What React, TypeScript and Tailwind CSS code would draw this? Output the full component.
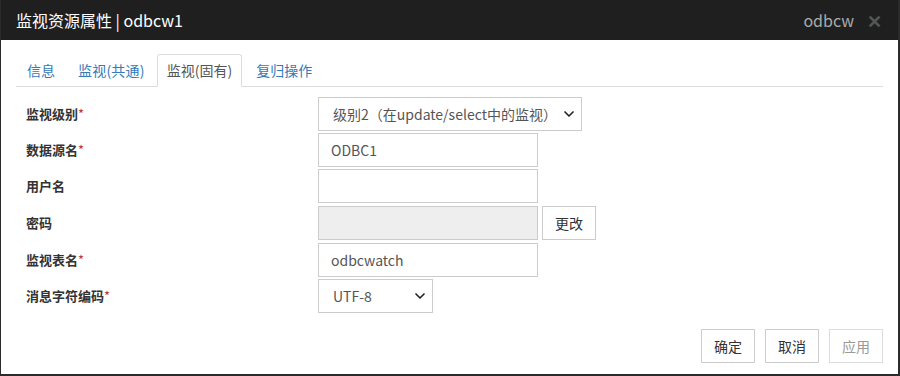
import { ChevronDown } from "lucide-react"

const font = { fontFamily: '"Noto Sans CJK SC", "Noto Sans", sans-serif' }

function Label({ text, required }: { text: string; required?: boolean }) {
  return (
    <div className="w-[292px] text-[13px] font-bold text-[#333]">
      {text}
      {required && <span className="text-[#c0392b] font-normal">*</span>}
    </div>
  )
}

function TextBox({ value, w = "w-[220px]", disabled }: { value?: string; w?: string; disabled?: boolean }) {
  return (
    <div className={`${w} h-[34px] border border-[#ccc] px-[12px] flex items-center text-[14px] text-[#555] ${disabled ? "bg-[#eee]" : "bg-white"}`}>
      {value}
    </div>
  )
}

function Select({ value, w }: { value: string; w: string }) {
  return (
    <div className={`${w} h-[34px] border border-[#ccc] pl-[14px] pr-[4px] flex items-center justify-between text-[14px] text-[#555] bg-white`}>
      <span>{value}</span>
      <ChevronDown size={16} strokeWidth={2.5} className="text-[#222]" />
    </div>
  )
}

function Btn({ text, disabled }: { text: string; disabled?: boolean }) {
  return (
    <div className={`w-[54px] h-[34px] border flex items-center justify-center text-[14px] bg-white ${disabled ? "border-[#ddd] text-[#999]" : "border-[#ccc] text-[#333]"}`}>
      {text}
    </div>
  )
}

export default function App() {
  return (
    <div style={font} className="w-[900px] h-[376px] bg-white border-l border-l-[#2b2b2b] border-r-2 border-r-[#2b2b2b] border-b-2 border-b-[#2b2b2b] flex flex-col">
      <header className="h-[40px] bg-[#1f1f1f] flex items-center justify-between pl-[15px] pr-[16px] shrink-0">
        <h1 className="text-[16px] text-white">监视资源属性 | odbcw1</h1>
        <div className="flex items-center gap-[13px]">
          <span className="text-[16px] text-[#aaa]">odbcw</span>
          <span className="text-[18px] font-bold text-[#555] leading-none">✕</span>
        </div>
      </header>

      <nav className="mt-[15px] mx-[15px] h-[32px] border-b border-[#ddd] flex items-end text-[14px]">
        <div className="px-[11px] h-[32px] flex items-center text-[#337ab7]">信息</div>
        <div className="px-[12px] h-[32px] flex items-center text-[#337ab7] tracking-[0.2px]">监视(共通)</div>
        <div className="px-[9px] h-[33px] -mb-px flex items-center text-[#555] bg-white border border-[#ddd] border-b-white rounded-t-[3px]">监视(固有)</div>
        <div className="px-[14px] h-[32px] flex items-center text-[#337ab7]">复归操作</div>
      </nav>

      <section className="mt-[10px] pl-[25px] flex flex-col gap-[2px]">
        <div className="flex items-center">
          <Label text="监视级别" required />
          <Select value="级别2（在update/select中的监视）" w="w-[264px]" />
        </div>
        <div className="flex items-center">
          <Label text="数据源名" required />
          <TextBox value="ODBC1" />
        </div>
        <div className="flex items-center">
          <Label text="用户名" />
          <TextBox />
        </div>
        <div className="flex items-center h-[36px]">
          <Label text="密码" />
          <TextBox disabled />
          <div className="ml-[4px]">
            <Btn text="更改" />
          </div>
        </div>
        <div className="flex items-center">
          <Label text="监视表名" required />
          <TextBox value="odbcwatch" />
        </div>
        <div className="flex items-center">
          <Label text="消息字符编码" required />
          <Select value="UTF-8" w="w-[115px]" />
        </div>
      </section>

      <footer className="mt-[16px] pr-[15px] flex justify-end gap-[10px]">
        <Btn text="确定" />
        <Btn text="取消" />
        <Btn text="应用" disabled />
      </footer>
    </div>
  )
}
